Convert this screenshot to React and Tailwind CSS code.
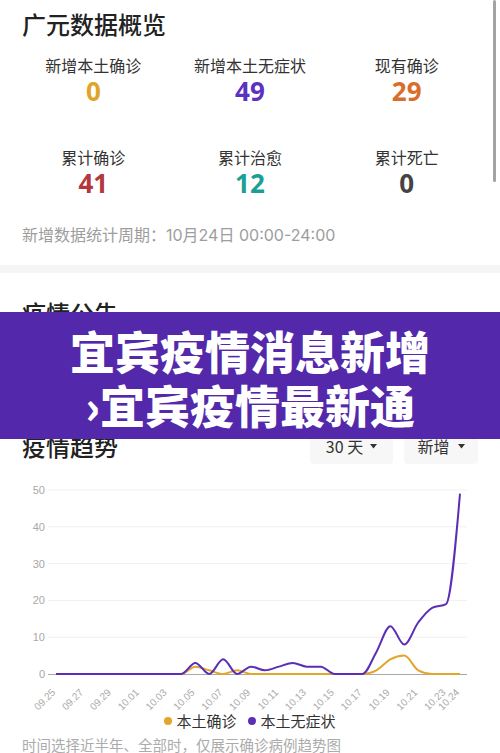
import React from "react";

const purple = [0,0,0,0,0,0,0,0,0,0,3,0,4,0,2,1,2,3,2,2,0,0,0,6,13,8,14,18,19,49];
const yellow = [0,0,0,0,0,0,0,0,0,0,2,1,0,1,0,0,0,0,0,0,0,0,0,1,4,5,1,0,0,0];
const X0 = 56;
const DX = 404 / 29;
const yOf = (v) => 194 - v * 3.68;

function monotone(vals) {
  const pts = vals.map((v, i) => [X0 + i * DX, yOf(v)]);
  const n = pts.length;
  const h = DX;
  const t = new Array(n).fill(0);
  for (let i = 1; i < n - 1; i++) {
    const s0 = (pts[i][1] - pts[i - 1][1]) / h;
    const s1 = (pts[i + 1][1] - pts[i][1]) / h;
    const p = (s0 + s1) / 2;
    const sg = (x) => (x < 0 ? -1 : 1);
    t[i] = (sg(s0) + sg(s1)) * Math.min(Math.abs(s0), Math.abs(s1), 0.5 * Math.abs(p)) || 0;
  }
  t[0] = (3 * (pts[1][1] - pts[0][1]) / h - t[1]) / 2;
  t[n - 1] = (3 * (pts[n - 1][1] - pts[n - 2][1]) / h - t[n - 2]) / 2;
  let d = `M${pts[0][0].toFixed(2)},${pts[0][1].toFixed(2)}`;
  for (let i = 0; i < n - 1; i++) {
    const [x0, y0] = pts[i];
    const [x1, y1] = pts[i + 1];
    d += ` C${(x0 + h / 3).toFixed(2)},${(y0 + (h * t[i]) / 3).toFixed(2)} ${(x1 - h / 3).toFixed(2)},${(y1 - (h * t[i + 1]) / 3).toFixed(2)} ${x1.toFixed(2)},${y1.toFixed(2)}`;
  }
  return d;
}

function dateLabel(i) {
  if (i <= 5) return `09.${25 + i}`;
  const d = i - 5;
  return `10.${d < 10 ? "0" + d : d}`;
}

const xTicks = [0, 2, 4, 6, 8, 10, 12, 14, 16, 18, 20, 22, 24, 26, 28, 29];

const stats = [
  { label: "新增本土确诊", value: "0", cls: "text-[#e0a428]" },
  { label: "新增本土无症状", value: "49", cls: "text-[#5b32c0]" },
  { label: "现有确诊", value: "29", cls: "text-[#d86e2c]" },
  { label: "累计确诊", value: "41", cls: "text-[#b2383c]" },
  { label: "累计治愈", value: "12", cls: "text-[#1a9f95]" },
  { label: "累计死亡", value: "0", cls: "text-[#444444]" },
];

function Caret() {
  return (
    <svg width="7" height="5" viewBox="0 0 7 5" className="block">
      <path d="M0 0 L7 0 L3.5 4.5 Z" fill="#333" />
    </svg>
  );
}

function Chart() {
  return (
    <svg width="500" height="232" className="block mt-[16px]">
      {[50, 40, 30, 20, 10].map((v) => (
        <line key={v} x1="48" x2="467" y1={yOf(v)} y2={yOf(v)} stroke="#f0f0f0" strokeWidth="1" />
      ))}
      <line x1="48" x2="467" y1={yOf(0) + 0.5} y2={yOf(0) + 0.5} stroke="#a8a8a8" strokeWidth="1" />
      {[0, 10, 20, 30, 40, 50].map((v) => (
        <text
          key={v}
          x="45"
          y={yOf(v) + 4}
          textAnchor="end"
          fontSize="11"
          fill="#a8a8a8"
          fontFamily="Liberation Sans, sans-serif"
        >
          {v}
        </text>
      ))}
      <path d={monotone(yellow)} stroke="#e3a62d" strokeWidth="2" fill="none" />
      <path d={monotone(purple)} stroke="#5a2fb5" strokeWidth="2" fill="none" />
      {xTicks.map((i) => {
        const x = X0 + i * DX;
        const y = 213;
        return (
          <text
            key={i}
            x={x}
            y={y}
            textAnchor="end"
            fontSize="10"
            fill="#aaaaaa"
            fontFamily="Liberation Sans, sans-serif"
            transform={`rotate(-45 ${x} ${y})`}
          >
            {dateLabel(i)}
          </text>
        );
      })}
    </svg>
  );
}

export default function App() {
  return (
    <div className="relative w-[500px] h-[753px] overflow-hidden bg-white font-['Noto_Sans_CJK_SC',sans-serif]">
      <section className="px-[22px] pt-[8px] pb-[19px]">
        <h1 className="text-[24px] leading-[32px] font-medium text-[#222]">广元数据概览</h1>
        <div className="mt-[14px] -mx-[7px] grid grid-cols-3 gap-y-[40px]">
          {stats.map((s) => (
            <div key={s.label} className="flex flex-col items-center">
              <div className="text-[16px] leading-[22px] text-[#333]">{s.label}</div>
              <div className={`text-[26px] leading-[30px] font-bold font-['Noto_Sans',sans-serif] ${s.cls}`}>
                {s.value}
              </div>
            </div>
          ))}
        </div>
        <p className="mt-[26px] text-[16px] leading-[22px] text-[#9d9d9d] font-['Inter','Noto_Sans_CJK_SC',sans-serif]">
          新增数据统计周期：10月24日 00:00-24:00
        </p>
      </section>

      <div className="h-[8px] bg-[#f5f5f5]" />

      <section className="px-[22px] pt-[24px] h-[147px]">
        <h2 className="text-[24px] leading-[32px] font-medium text-[#222]">疫情公告</h2>
      </section>

      <div className="h-[8px] bg-[#f5f5f5]" />

      <section>
        <div className="flex items-center justify-between h-[36px] px-[22px]">
          <h2 className="text-[24px] leading-[32px] font-medium text-[#222]">疫情趋势</h2>
          <div className="flex items-center gap-[11px]">
            <div className="w-[83px] h-[36px] rounded-[4px] bg-[#f7f7f7] flex items-center justify-center gap-[7px] text-[16px] text-[#333]">
              <span>30 天</span>
              <Caret />
            </div>
            <div className="w-[74px] h-[36px] rounded-[4px] bg-[#f7f7f7] flex items-center justify-center gap-[8px] text-[16px] text-[#333]">
              <span>新增</span>
              <Caret />
            </div>
          </div>
        </div>

        <Chart />

        <div className="flex items-center justify-center h-[18px] text-[15px] text-[#333]">
          <span className="w-[8px] h-[8px] rounded-full bg-[#e3a62d]" />
          <span className="ml-[4px]">本土确诊</span>
          <span className="ml-[11px] w-[8px] h-[8px] rounded-full bg-[#5a2fb5]" />
          <span className="ml-[5px]">本土无症状</span>
        </div>

        <p className="mt-[5px] px-[22px] text-[14.5px] leading-[20px] text-[#ababab]">
          时间选择近半年、全部时，仅展示确诊病例趋势图
        </p>
      </section>

      <div className="absolute left-0 right-0 top-[312px] h-[127px] bg-[#5328aa] flex flex-col items-center justify-center pt-[5px] text-white font-black text-[45px] leading-[54px]">
        <div>宜宾疫情消息新增</div>
        <div>›宜宾疫情最新通</div>
      </div>

      <div className="absolute right-[4px] top-0 w-[3px] h-[182px] rounded-full bg-[#a3a3a3]" />
    </div>
  );
}
